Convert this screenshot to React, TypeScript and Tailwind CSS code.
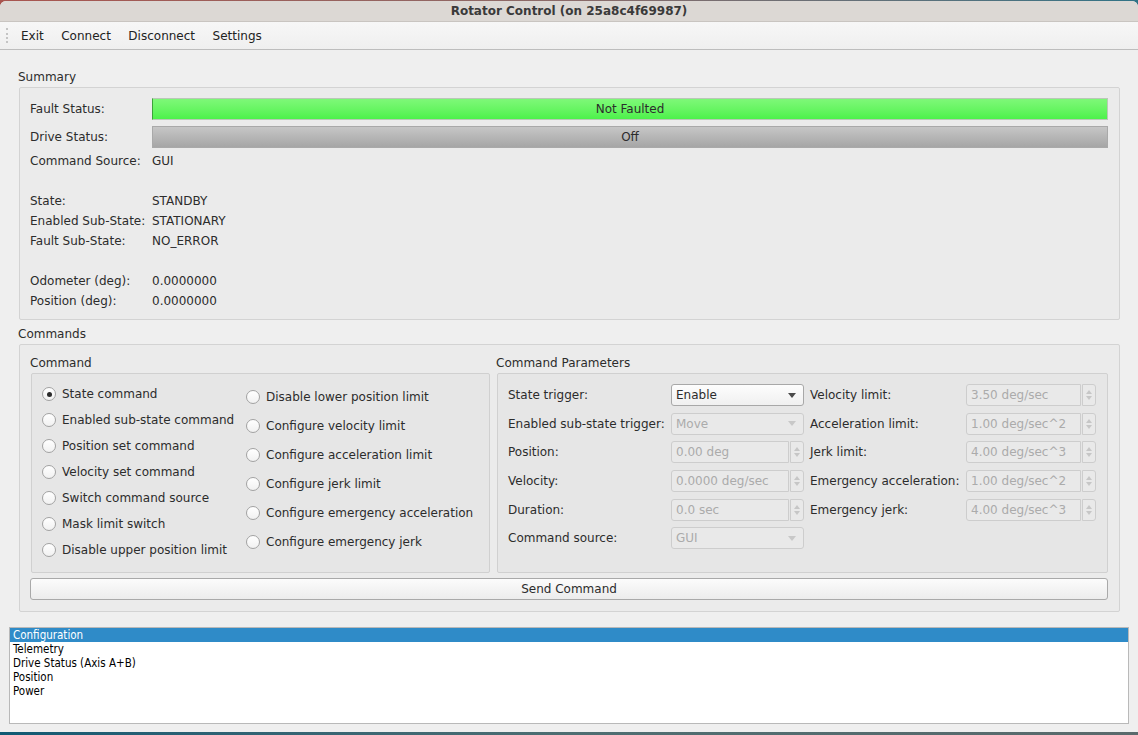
import React from 'react';

const leftCommands = [
  'State command',
  'Enabled sub-state command',
  'Position set command',
  'Velocity set command',
  'Switch command source',
  'Mask limit switch',
  'Disable upper position limit',
];

const rightCommands = [
  'Disable lower position limit',
  'Configure velocity limit',
  'Configure acceleration limit',
  'Configure jerk limit',
  'Configure emergency acceleration',
  'Configure emergency jerk',
];

const pages = ['Configuration', 'Telemetry', 'Drive Status (Axis A+B)', 'Position', 'Power'];

function Radio({ label, checked }: { label: string; checked?: boolean }) {
  return (
    <div className="flex items-center gap-[6px]">
      <span className="w-[14px] h-[14px] rounded-full border border-[#a2a2a2] bg-linear-to-b from-white to-[#f1f1f1] flex items-center justify-center shrink-0">
        {checked && <span className="w-[5px] h-[5px] rounded-full bg-[#2b2b2b]" />}
      </span>
      <span className="whitespace-nowrap">{label}</span>
    </div>
  );
}

function Arrow({ disabled }: { disabled?: boolean }) {
  return (
    <svg width="8" height="5" viewBox="0 0 8 5" className="mr-[7px]">
      <path d="M0 0h8L4 5z" fill={disabled ? '#c8c8c8' : '#4a4a4a'} />
    </svg>
  );
}

function Combo({ value, disabled }: { value: string; disabled?: boolean }) {
  return (
    <div
      className={
        disabled
          ? 'flex items-center justify-between h-[22px] border border-[#cdcdcd] rounded-[3px] bg-[#e9e9e9] text-[#ababab]'
          : 'flex items-center justify-between h-[22px] border border-[#a8a8a8] rounded-[3px] bg-linear-to-b from-[#fdfdfd] to-[#f0f0f0] text-[#2c2c2c]'
      }
    >
      <span className="pl-[4px]">{value}</span>
      <Arrow disabled={disabled} />
    </div>
  );
}

function Spin({ value }: { value: string }) {
  return (
    <div className="flex h-[22px] gap-[1px]">
      <div className="flex-1 flex items-center border border-[#cdcdcd] rounded-l-[3px] bg-[#e9e9e9] text-[#ababab] pl-[4px] whitespace-nowrap overflow-hidden">
        {value}
      </div>
      <div className="w-[14px] flex flex-col items-center justify-center gap-[2px] border border-[#cdcdcd] rounded-r-[3px] bg-[#e9e9e9]">
        <svg width="6" height="4" viewBox="0 0 6 4">
          <path d="M0 4L3 0l3 4z" fill="#c6c6c6" />
        </svg>
        <svg width="6" height="4" viewBox="0 0 6 4">
          <path d="M0 0h6L3 4z" fill="#c6c6c6" />
        </svg>
      </div>
    </div>
  );
}

function SummaryRow({ label, value }: { label: string; value?: string }) {
  return (
    <div className="flex items-center h-[20px]">
      <span className="w-[122px]">{label}</span>
      <span>{value}</span>
    </div>
  );
}

export default function App() {
  return (
    <div className="w-[1138px] h-[735px] overflow-hidden flex flex-col bg-linear-to-r from-[#a8554f] via-[#8a6a68] to-[#2f7386] font-['DejaVu_Sans',sans-serif] text-[12px] text-[#2c2c2c]">
      <div className="mt-[1px] h-[731px] shrink-0 bg-[#efefef] rounded-t-[6px] flex flex-col overflow-hidden">
        {/* Title bar */}
        <div className="h-[21px] shrink-0 bg-[#dcd8d4] border-b border-[#c9c5c1] flex items-center justify-center font-bold text-[12px] text-[#3a3a3a]">
          Rotator Control (on 25a8c4f69987)
        </div>

        {/* Menu bar */}
        <div className="h-[28px] shrink-0 flex items-center bg-linear-to-b from-[#f7f7f7] to-[#efefef] border-b border-[#bdbdbd]">
          <div className="ml-[6px] w-[3px] h-[15px] border-l-2 border-dotted border-[#c4c4c4]" />
          <div className="flex items-center ml-[12px] gap-[17.5px] text-[#222]">
            <span>Exit</span>
            <span>Connect</span>
            <span>Disconnect</span>
            <span>Settings</span>
          </div>
        </div>

        {/* Content */}
        <div className="flex-1 flex flex-col px-[9px] pt-[19px]">
          <div className="ml-[10px] mr-[9px] flex flex-col">
            <div className="-ml-[1px] h-[16px] leading-[16px]">Summary</div>
            <div className="mt-[2px] border border-[#d3d3d3] rounded-[2px] bg-[#ebebeb] pl-[10px] pr-[11px] pt-[10px] pb-[8px]">
              <div className="flex items-center h-[22px]">
                <span className="w-[122px]">Fault Status:</span>
                <div className="flex-1 h-[22px] flex items-center justify-center border border-[#b9c8b6] border-l-[#3ca23a] bg-linear-to-b from-[#7ef878] to-[#4cf24a]">
                  Not Faulted
                </div>
              </div>
              <div className="flex items-center h-[22px] mt-[6px]">
                <span className="w-[122px]">Drive Status:</span>
                <div className="flex-1 h-[22px] flex items-center justify-center border border-[#a9a9a9] bg-linear-to-b from-[#c6c6c6] to-[#a6a6a6]">
                  Off
                </div>
              </div>
              <div className="mt-[3px]">
                <SummaryRow label="Command Source:" value="GUI" />
                <SummaryRow label="" />
                <SummaryRow label="State:" value="STANDBY" />
                <SummaryRow label="Enabled Sub-State:" value="STATIONARY" />
                <SummaryRow label="Fault Sub-State:" value="NO_ERROR" />
                <SummaryRow label="" />
                <SummaryRow label="Odometer (deg):" value="0.0000000" />
                <SummaryRow label="Position (deg):" value="0.0000000" />
              </div>
            </div>

            <div className="-ml-[1px] mt-[6px] h-[16px] leading-[16px]">Commands</div>
            <div className="mt-[2px] border border-[#d3d3d3] rounded-[2px] bg-[#ebebeb] pl-[11px] pr-[11px] pt-[10px] pb-[11px]">
              <div className="flex gap-[7px]">
                {/* Command selection */}
                <div className="w-[459px] flex flex-col">
                  <div className="-ml-[1px] h-[16px] leading-[16px]">Command</div>
                  <div className="mt-[2px] h-[200px] border border-[#d0d0d0] rounded-[2px] bg-[#e6e6e6] flex pl-[10px]">
                    <div className="flex flex-col pt-[7px] w-[204px]">
                      {leftCommands.map((c, i) => (
                        <div key={c} className="h-[26px] flex items-center">
                          <Radio label={c} checked={i === 0} />
                        </div>
                      ))}
                    </div>
                    <div className="flex flex-col pt-[8px]">
                      {rightCommands.map((c) => (
                        <div key={c} className="h-[29px] flex items-center">
                          <Radio label={c} />
                        </div>
                      ))}
                    </div>
                  </div>
                </div>

                {/* Parameters */}
                <div className="flex-1 flex flex-col">
                  <div className="-ml-[1px] h-[16px] leading-[16px]">Command Parameters</div>
                  <div className="mt-[2px] h-[200px] border border-[#d0d0d0] rounded-[2px] bg-[#e6e6e6] pl-[10px] pt-[10px]">
                    <div className="grid grid-cols-[163px_133px_162px_130px] auto-rows-[22px] gap-y-[6.7px] items-center">
                      <span>State trigger:</span>
                      <Combo value="Enable" />
                      <span className="pl-[6px]">Velocity limit:</span>
                      <Spin value="3.50 deg/sec" />

                      <span>Enabled sub-state trigger:</span>
                      <Combo value="Move" disabled />
                      <span className="pl-[6px]">Acceleration limit:</span>
                      <Spin value="1.00 deg/sec^2" />

                      <span>Position:</span>
                      <Spin value="0.00 deg" />
                      <span className="pl-[6px]">Jerk limit:</span>
                      <Spin value="4.00 deg/sec^3" />

                      <span>Velocity:</span>
                      <Spin value="0.0000 deg/sec" />
                      <span className="pl-[6px]">Emergency acceleration:</span>
                      <Spin value="1.00 deg/sec^2" />

                      <span>Duration:</span>
                      <Spin value="0.0 sec" />
                      <span className="pl-[6px]">Emergency jerk:</span>
                      <Spin value="4.00 deg/sec^3" />

                      <span>Command source:</span>
                      <Combo value="GUI" disabled />
                    </div>
                  </div>
                </div>
              </div>
              <div className="-ml-[1px] mt-[5px] h-[22px] flex items-center justify-center border border-[#a9a9a9] rounded-[3px] bg-linear-to-b from-[#fcfcfc] to-[#ececec]">
                Send Command
              </div>
            </div>
          </div>

          {/* Page list */}
          <div className="mt-[15px] h-[97px] border border-[#b9b9b9] bg-white flex flex-col font-['DejaVu_Sans_Condensed','DejaVu_Sans',sans-serif] text-[11.5px] text-black">
            {pages.map((p, i) => (
              <div
                key={p}
                className={
                  i === 0
                    ? 'h-[14px] leading-[14px] pl-[3px] bg-[#2f8bc8] text-white'
                    : 'h-[14px] leading-[14px] pl-[3px]'
                }
              >
                {p}
              </div>
            ))}
          </div>
        </div>
      </div>

      {/* Desktop strip below the window */}
      <div className="h-[3px] shrink-0 bg-linear-to-r from-[#0f5a74] via-[#4e6e72] to-[#5a6a6c]" />
    </div>
  );
}
